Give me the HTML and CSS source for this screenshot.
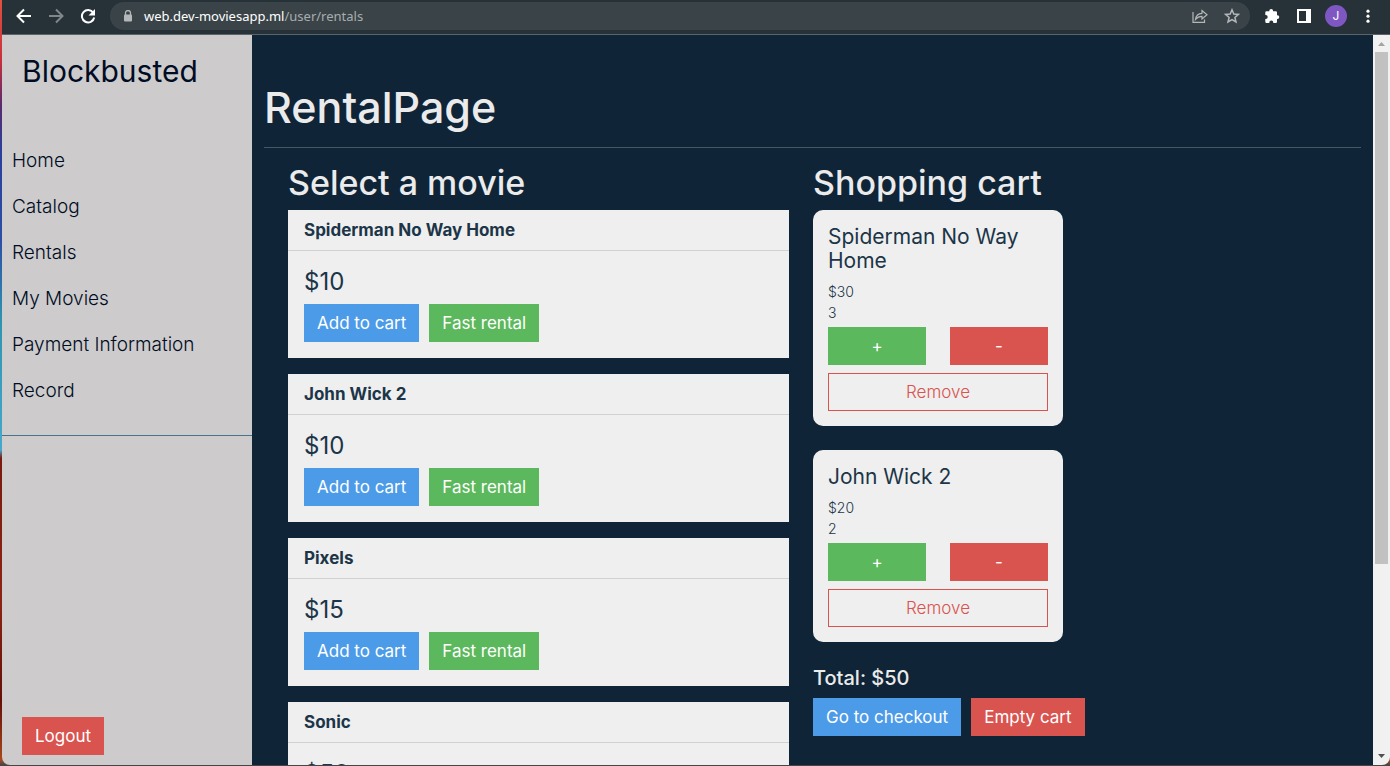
FILE: index.html
```html
<!DOCTYPE html>
<html lang="en">
<head>
<meta charset="utf-8">
<title>Blockbusted - Rentals</title>
<link rel="stylesheet" href="styles.css">
</head>
<body>
<div class="window">
  <header class="toolbar">
    <button class="tool" aria-label="Back"><svg viewBox="0 0 16 16"><path d="M15 8H2M8 1.5L1.5 8L8 14.500" fill="none" stroke="#fff" stroke-width="2"/></svg></button>
    <button class="tool" aria-label="Forward"><svg viewBox="0 0 16 16"><path d="M1 8H14M8 1.500L14.500 8L8 14.500" fill="none" stroke="#80878a" stroke-width="2"/></svg></button>
    <button class="tool" aria-label="Reload"><svg viewBox="0 0 16 16"><path d="M13.300 4.800A6.200 6.200 0 1 0 14.200 9.500" fill="none" stroke="#fff" stroke-width="2"/><path d="M15 1V7.500H8.500Z" fill="#fff"/></svg></button>
    <div class="address">
      <svg class="lock" viewBox="0 0 10 12"><path d="M2.500 5V3a2.500 2.500 0 0 1 5 0V5" fill="none" stroke="#b4b8ba" stroke-width="1.300"/><rect x="1" y="4.500" width="8" height="7" rx="1" fill="#b4b8ba"/></svg>
      <div class="url"><span class="host">web.dev-moviesapp.ml</span>/user/rentals</div>
      <button class="tool" aria-label="Share"><svg viewBox="0 0 16 16" fill="none" stroke="#b4b8ba" stroke-width="1.200"><path d="M1 4V14.400H12.500V11.500"/><path d="M3.500 11.500C4 7.500 6.500 5.500 10 5.300V2.500L15 6.800L10 11V8.300C7.300 8.300 5.200 9.300 3.500 11.500Z"/></svg></button>
      <button class="tool" aria-label="Bookmark"><svg viewBox="0 0 16 16"><path d="M8 1.800L9.800 6L14.400 6.400L10.900 9.400L12 13.900L8 11.500L4 13.900L5.100 9.400L1.600 6.400L6.200 6Z" fill="none" stroke="#b4b8ba" stroke-width="1.500"/></svg></button>
    </div>
    <div class="actions">
      <button class="tool" aria-label="Extensions"><svg viewBox="0 0 16 16"><path d="M2.500 3.200H5.300V2.800a1.900 1.900 0 0 1 3.800 0V3.200H11.800a1.200 1.200 0 0 1 1.200 1.200V7.200H13.400a1.900 1.900 0 0 1 0 3.800H13V13.800a1.200 1.200 0 0 1-1.200 1.200H9.300V14.500a2 2 0 0 0-4 0V15H2.500a1.200 1.200 0 0 1-1.200-1.200V11H1.700a2 2 0 0 0 0-4H1.300V4.400A1.200 1.200 0 0 1 2.500 3.200Z" fill="#fff"/></svg></button>
      <button class="tool" aria-label="Side panel"><svg viewBox="0 0 16 16"><path fill-rule="evenodd" d="M1 1H15V15H1ZM3 3V13H10V3Z" fill="#fff"/></svg></button>
      <button class="avatar" aria-label="Profile">J</button>
      <button class="tool" aria-label="Menu"><svg viewBox="0 0 16 16" fill="#fff"><circle cx="8" cy="3.200" r="1.600"/><circle cx="8" cy="8.200" r="1.600"/><circle cx="8" cy="13.200" r="1.600"/></svg></button>
    </div>
  </header>

  <div class="page">
    <aside class="sidebar">
      <div class="brand">Blockbusted</div>
      <nav class="nav">
        <a href="#">Home</a>
        <a href="#">Catalog</a>
        <a href="#">Rentals</a>
        <a href="#">My Movies</a>
        <a href="#">Payment Information</a>
        <a href="#">Record</a>
      </nav>
      <button class="btn danger logout">Logout</button>
    </aside>

    <main class="content">
      <h1>RentalPage</h1>
      <hr>
      <div class="columns">
        <section>
          <h2>Select a movie</h2>
          <article class="movie">
            <h3>Spiderman No Way Home</h3>
            <div class="movie-body">
              <p class="price">$10</p>
              <div class="buttons"><button class="btn primary">Add to cart</button><button class="btn success">Fast rental</button></div>
            </div>
          </article>
          <article class="movie">
            <h3>John Wick 2</h3>
            <div class="movie-body">
              <p class="price">$10</p>
              <div class="buttons"><button class="btn primary">Add to cart</button><button class="btn success">Fast rental</button></div>
            </div>
          </article>
          <article class="movie">
            <h3>Pixels</h3>
            <div class="movie-body">
              <p class="price">$15</p>
              <div class="buttons"><button class="btn primary">Add to cart</button><button class="btn success">Fast rental</button></div>
            </div>
          </article>
          <article class="movie">
            <h3>Sonic</h3>
            <div class="movie-body">
              <p class="price">$50</p>
              <div class="buttons"><button class="btn primary">Add to cart</button><button class="btn success">Fast rental</button></div>
            </div>
          </article>
        </section>

        <section>
          <h2>Shopping cart</h2>
          <article class="item">
            <h3>Spiderman No Way Home</h3>
            <p>$30</p>
            <p>3</p>
            <div class="quantity"><button class="btn success">+</button><button class="btn danger">-</button></div>
            <button class="btn outline">Remove</button>
          </article>
          <article class="item">
            <h3>John Wick 2</h3>
            <p>$20</p>
            <p>2</p>
            <div class="quantity"><button class="btn success">+</button><button class="btn danger">-</button></div>
            <button class="btn outline">Remove</button>
          </article>
          <p class="total">Total: $50</p>
          <div class="buttons"><button class="btn primary">Go to checkout</button><button class="btn danger">Empty cart</button></div>
        </section>
      </div>
    </main>

    <div class="scrollbar">
      <svg class="arrow" viewBox="0 0 17 17"><path d="M5 11L8.500 7L12 11Z" fill="#a3a3a3"/></svg>
      <div class="track"><div class="thumb"></div></div>
      <svg class="arrow" viewBox="0 0 17 17"><path d="M5 6L8.500 10L12 6Z" fill="#505050"/></svg>
    </div>
  </div>
</div>
</body>
</html>
```
FILE: styles.css
```css
* {
  box-sizing: border-box;
}

body {
  margin: 0;
  height: 100vh;
  padding: 0 0 1px 2px;
  overflow: hidden;
  background: linear-gradient(#e0523f 0, #c9303c 60px, #5a2a6c 105px, #2b3f9c 150px, #2b4fa5 240px, #2f93b0 320px, #46a8cc 450px, #7a1a10 458px, #8c2414 600px, #641008 700px, #a8481c 760px, #45464a 765px);
  font-family: Inter, "Open Sans", sans-serif;
  font-size: 17px;
  line-height: 24px;
  color: #1c3548;
}

h1, h2, h3, p {
  margin: 0;
}

button {
  font: inherit;
}

.window {
  display: flex;
  flex-direction: column;
  height: 100%;
  overflow: hidden;
  border-radius: 0 0 8px 8px;
}

/* Browser toolbar */
.toolbar {
  flex: none;
  display: flex;
  align-items: center;
  gap: 16px;
  height: 35px;
  padding: 0 14px 2px 14px;
  background: #263238;
  border-bottom: 1px solid #5b6468;
}

.tool {
  flex: none;
  width: 16px;
  height: 16px;
  padding: 0;
  border: 0;
  background: none;
}

.tool svg {
  display: block;
}

.address {
  flex: 1;
  display: flex;
  align-items: center;
  gap: 16px;
  height: 28px;
  margin: 0 -2px;
  padding: 0 10px 0 13px;
  border-radius: 14px;
  background: #3a4448;
}

.lock {
  width: 10px;
  height: 12px;
}

.url {
  flex: 1;
  margin-left: -5px;
  font-family: "Noto Sans", sans-serif;
  font-size: 13px;
  color: #a8adaf;
}

.host {
  color: #fff;
}

.actions {
  display: flex;
  align-items: center;
  gap: 16px;
}

.avatar {
  width: 22px;
  height: 22px;
  margin: 0 -3px;
  padding: 0;
  border: 0;
  border-radius: 50%;
  background: #7e57c2;
  color: #fff;
  font-size: 12px;
  line-height: 22px;
}

.page {
  flex: 1;
  display: flex;
  min-height: 0;
}

/* Sidebar */
.sidebar {
  flex: none;
  display: flex;
  flex-direction: column;
  width: 250px;
  background: #cdcbcb;
  color: #000c24;
}

.brand {
  padding: 20px;
  font-size: 30px;
  line-height: 32px;
}

.nav {
  display: flex;
  flex-direction: column;
  padding: 31px 0 21px;
  border-bottom: 1px solid #47748b;
}

.nav a {
  padding: 10px;
  font-size: 19px;
  font-weight: 300;
  line-height: 26px;
  color: inherit;
  text-decoration: none;
}

.logout {
  align-self: flex-start;
  margin: auto 0 10px 20px;
}

/* Buttons */
.btn {
  padding: 6px 12px;
  border: 1px solid transparent;
  color: #fff;
  white-space: nowrap;
}

.primary {
  background: #4c9be8;
}

.success {
  background: #5cb85c;
}

.danger {
  background: #d9534f;
}

.outline {
  width: 100%;
  border-color: #d9534f;
  background: none;
  color: #d9534f;
  font-weight: 300;
}

.buttons {
  display: flex;
  gap: 10px;
}

/* Rental page */
.content {
  flex: 1;
  min-width: 0;
  overflow: hidden;
  padding: 48px 12px;
  background: #0f2537;
}

h1 {
  font-size: 43px;
  font-weight: 500;
  line-height: 48px;
  color: #ebebeb;
}

hr {
  height: 1px;
  margin: 16px 0;
  border: 0;
  background: #465766;
}

.columns {
  display: grid;
  grid-template-columns: 1fr 1fr;
  gap: 24px;
  padding: 0 47px 0 24px;
}

h2 {
  margin-bottom: 8px;
  font-size: 34px;
  font-weight: 500;
  line-height: 38px;
  color: #ebebeb;
}

.movie {
  margin-bottom: 16px;
  background: #efefef;
}

.movie h3 {
  padding: 8px 16px;
  border-bottom: 1px solid #d0d1d2;
  font-size: 17px;
  font-weight: 700;
}

.movie-body {
  padding: 16px;
}

.price {
  margin-bottom: 8px;
  font-size: 24px;
  line-height: 29px;
}

.item {
  width: 250px;
  margin-bottom: 24px;
  padding: 15px;
  border-radius: 10px;
  background: #efefef;
}

.item h3 {
  margin-bottom: 8px;
  font-size: 21px;
  font-weight: 400;
}

.item p {
  font-size: 14px;
  font-weight: 300;
  line-height: 21px;
}

.quantity {
  display: grid;
  grid-template-columns: 1fr 1fr;
  gap: 24px;
  margin: 4px 0 8px;
}

.total {
  margin-bottom: 8px;
  font-size: 20px;
  font-weight: 500;
  color: #ebebeb;
}

/* Scrollbar */
.scrollbar {
  flex: none;
  display: flex;
  flex-direction: column;
  width: 17px;
  background: #f1f1f1;
}

.arrow {
  width: 17px;
  height: 17px;
}

.track {
  flex: 1;
  padding: 0 2px;
}

.thumb {
  height: 73.5%;
  background: #c1c1c1;
}
```
